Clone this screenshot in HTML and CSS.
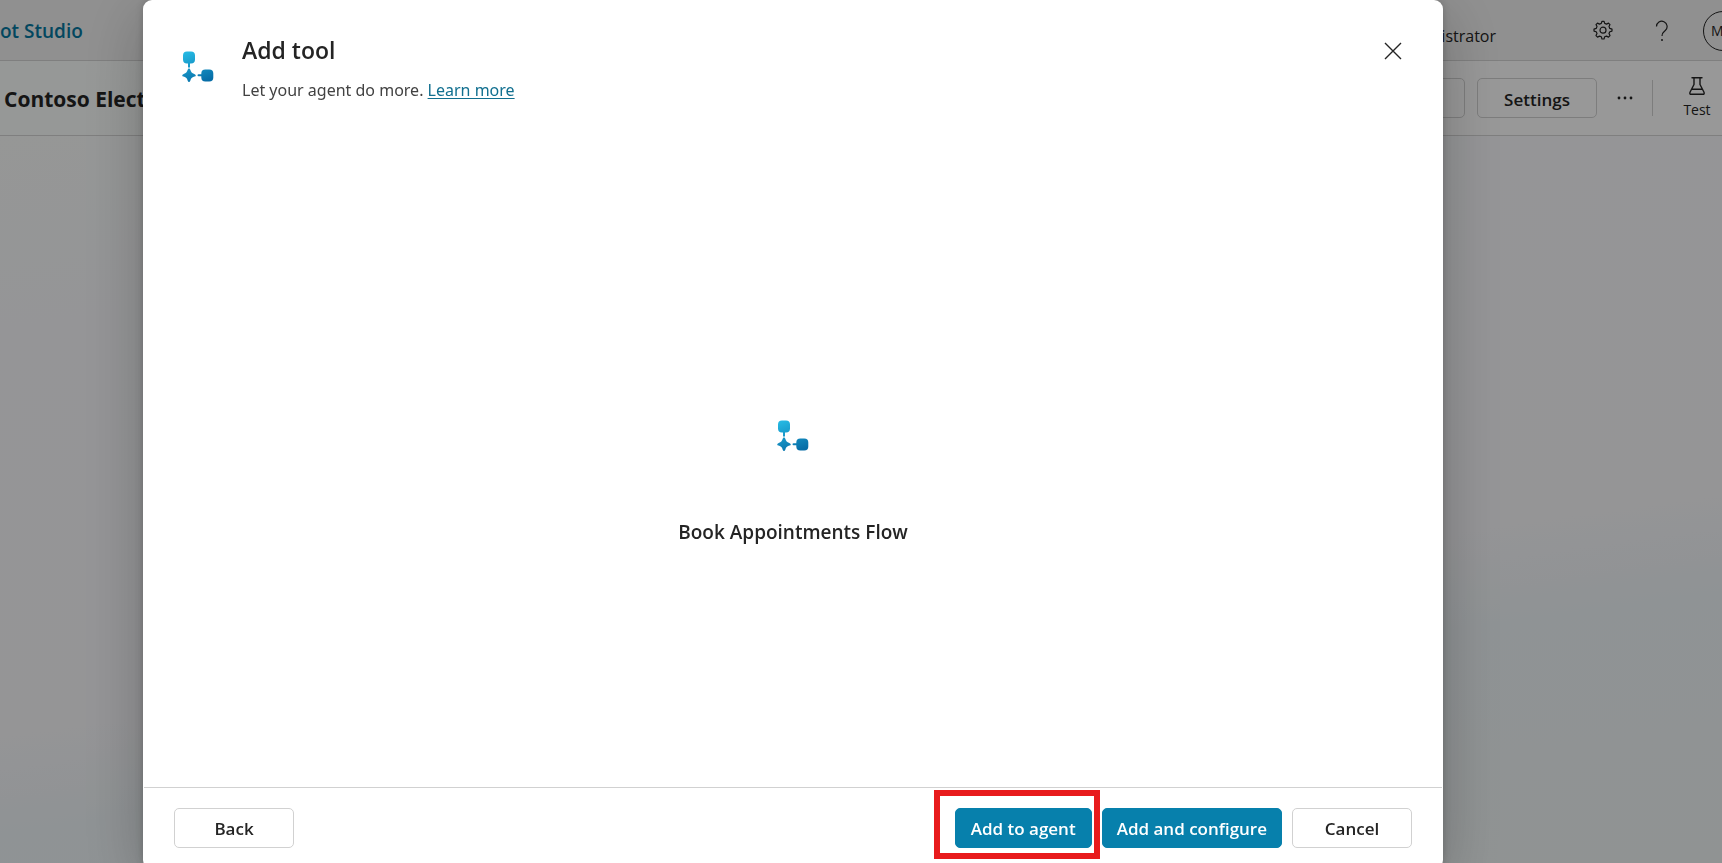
FILE: index.html
```html
<!DOCTYPE html>
<html lang="en">
<head>
<meta charset="utf-8">
<title>Add tool</title>
<link rel="stylesheet" href="styles.css">
</head>
<body>
<svg class="defs" aria-hidden="true">
  <defs>
    <linearGradient id="flow-fill" gradientUnits="userSpaceOnUse" x1="8" y1="0" x2="20" y2="32">
      <stop offset="0" stop-color="#25b8e2"/>
      <stop offset="1" stop-color="#066ca6"/>
    </linearGradient>
    <symbol id="flow" viewBox="0 0 32 32">
      <g fill="url(#flow-fill)">
        <path d="M5 0.500h4q4 0 4 4v4q0 4-4 4H8v4H6v-4H5q-4 0-4-4v-4q0-4 4-4z"/>
        <path d="M7 17.500c.7 0 1 .5 1.300 1.300.8 2.500 1.500 3.200 4 4.200 2 .8 2 2 0 2.600-2.500.9-3.200 1.700-4 4.100-.5 1.700-2.100 1.700-2.600 0-.8-2.400-1.500-3.200-4-4.100-2-.6-2-1.800 0-2.600 2.500-1 3.200-1.700 4-4.200.3-.8.600-1.300 1.300-1.300z"/>
        <path d="M16.500 23.300H19.300V22.500q0-4 4-4h4q4 0 4 4v4q0 4-4 4h-4q-4 0-4-4v-1.200H16.500q-1 0-1-1t1-1z"/>
      </g>
    </symbol>
  </defs>
</svg>

<div class="app">
  <header class="topbar">
    <a class="brand" href="#">ot Studio</a>
    <div class="account">
      <span class="user">Administrator</span>
      <button class="icon-btn gear" aria-label="Settings menu">
        <svg width="22" height="22" viewBox="0 0 22 22" fill="none" stroke="currentColor" stroke-width="1.200" stroke-linejoin="round"><path d="M9.300 3.400 10 1.300h2l.7 2.100 1.800.7 2-1 1.500 1.500-1 2 .8 1.800 2.200.7v2l-2.200.7-.8 1.800 1 2-1.500 1.500-2-1-1.800.7-.7 2.200h-2l-.7-2.200-1.800-.7-2 1L4 15.600l1-2-.8-1.800L2 11.100v-2l2.200-.7L5 6.600l-1-2 1.500-1.500 2 1z"/><circle cx="11" cy="10.200" r="3"/></svg>
      </button>
      <button class="icon-btn help" aria-label="Help">
        <svg width="14" height="22" viewBox="0 0 14 22" fill="none" stroke="currentColor" stroke-width="1.200"><path d="M1.500 6.500a5.300 5.300 0 1 1 8.800 4C8.500 12 7 13 7 16"/><circle cx="7" cy="20" r="1" fill="currentColor" stroke="none"/></svg>
      </button>
      <button class="avatar" aria-label="Account">M</button>
    </div>
  </header>
  <div class="agentbar">
    <h2 class="agent-name">Contoso Electronics</h2>
    <div class="actions">
      <button class="btn">Publish</button>
      <button class="btn">Settings</button>
      <button class="icon-btn more" aria-label="More">
        <svg width="18" height="4" viewBox="0 0 18 4" fill="currentColor"><circle cx="3" cy="2" r="1.400"/><circle cx="9" cy="2" r="1.400"/><circle cx="15" cy="2" r="1.400"/></svg>
      </button>
      <span class="rule"></span>
      <button class="icon-btn test">
        <svg width="18" height="20" viewBox="0 0 18 20" fill="none" stroke="currentColor" stroke-width="1.400" stroke-linejoin="round" stroke-linecap="round"><path d="M4 1.700h10M6 1.700v6.800L2 16.300q-.7 2 1.200 2h11.600q1.900 0 1.200-2L12 8.500V1.700M4 13.200h10"/></svg>
        Test
      </button>
    </div>
  </div>
  <main class="canvas"></main>
</div>

<div class="overlay">
  <section class="dialog" role="dialog" aria-labelledby="title">
    <header class="dialog-head">
      <svg class="flow-icon" aria-hidden="true"><use href="#flow"/></svg>
      <div class="heading">
        <h1 id="title">Add tool</h1>
        <p>Let your agent do more. <a href="#">Learn more</a></p>
      </div>
      <button class="icon-btn close" aria-label="Close">
        <svg width="18" height="18" viewBox="0 0 18 18" stroke="currentColor" stroke-width="1.400"><path d="M1 1l16 16M17 1 1 17"/></svg>
      </button>
    </header>
    <div class="dialog-body">
      <svg class="flow-icon" aria-hidden="true"><use href="#flow"/></svg>
      <h2>Book Appointments Flow</h2>
    </div>
    <footer class="dialog-foot">
      <button class="btn">Back</button>
      <div class="foot-actions">
        <button class="btn primary highlighted">Add to agent</button>
        <button class="btn primary">Add and configure</button>
        <button class="btn">Cancel</button>
      </div>
    </footer>
  </section>
</div>
</body>
</html>
```
FILE: styles.css
```css
* { box-sizing: border-box; }

body {
  margin: 0;
  height: 100vh;
  overflow: hidden;
  font-family: "Open Sans", "Noto Sans", sans-serif;
  font-size: 17px;
  color: #242424;
}

h1, h2, p { margin: 0; }
button { font: inherit; color: inherit; }
svg { display: block; flex: none; }
.defs { position: absolute; width: 0; height: 0; }

.app {
  display: flex;
  flex-direction: column;
  height: 100vh;
}

.topbar {
  display: flex;
  justify-content: space-between;
  align-items: center;
  height: 61px;
  padding-top: 1px;
  background: #f0f0f0;
  border-bottom: 1px solid #d4d4d4;
  overflow: hidden;
}

.brand {
  color: #06779f;
  font-size: 19px;
  font-weight: 600;
  text-decoration: none;
}

.account {
  display: flex;
  align-items: center;
  margin-right: -21px;
}

.user { padding-top: 10px; font-size: 16px; }

.icon-btn {
  display: flex;
  align-items: center;
  justify-content: center;
  padding: 0;
  border: 0;
  background: none;
}

.gear { margin-left: 96px; }
.help { margin: 0 34px 0 41px; }

.avatar {
  width: 40px;
  height: 40px;
  padding: 0 0 0 7px;
  text-align: left;
  border: 1px solid #242424;
  border-radius: 50%;
  background: none;
  font-size: 14px;
}

.agentbar {
  display: flex;
  justify-content: space-between;
  align-items: center;
  height: 75px;
  padding-left: 4px;
  background: linear-gradient(90deg, #fafdfc, #fdfdfd 60%);
  border-bottom: 1px solid #d4d4d4;
}

.agent-name { padding-top: 1px; font-size: 21px; font-weight: 700; }
.actions { display: flex; align-items: center; }
.actions .btn { margin-right: 12px; }

.btn {
  min-width: 120px;
  height: 40px;
  padding: 0 14px;
  border: 1px solid #d1d1d1;
  border-radius: 5px;
  background: #fff;
  font-size: 17px;
  font-weight: 600;
  white-space: nowrap;
}

.actions .btn { padding-top: 2px; background: none; }
.more { width: 32px; height: 40px; }
.rule { width: 1px; height: 36px; margin-left: 11px; background: #d1d1d1; }

.test {
  flex-direction: column;
  gap: 4px;
  width: 44px;
  margin: 0 3px 0 22px;
  font-size: 14px;
  line-height: 20px;
}

.canvas {
  flex: 1;
  background: linear-gradient(172deg, #fafcfb 0%, #f8f9fc 20%, #f8f8fb 62%, #eff5f8 72%, #f1f6f6 100%);
}

.overlay {
  position: fixed;
  inset: 0 0 -6px;
  display: flex;
  padding: 0 279px 0 143px;
  background: rgba(0, 0, 0, 0.4);
}

.dialog {
  flex: 1;
  display: flex;
  flex-direction: column;
  border-radius: 9px;
  background: #fff;
  box-shadow: 0 0 10px rgba(0, 0, 0, 0.2), 0 16px 64px rgba(0, 0, 0, 0.24);
}

.dialog-head {
  display: flex;
  align-items: flex-start;
  padding: 32px 41px 0 39px;
}

.flow-icon { width: 32px; height: 32px; }
.dialog-head .flow-icon { margin-top: 19px; }
.heading { flex: 1; margin-left: 28px; }
.heading h1 { font-size: 23px; font-weight: 600; line-height: 36px; }
.heading p { margin-top: 8px; font-family: "Noto Sans", sans-serif; font-size: 16px; line-height: 28px; color: #424242; }
.heading a { color: #116f8f; text-underline-offset: 2px; text-decoration-thickness: 1px; }
.close { margin-top: 10px; }

.dialog-body {
  flex: 1;
  display: flex;
  flex-direction: column;
  align-items: center;
  justify-content: center;
  gap: 66px;
  padding-top: 74px;
}

.dialog-body h2 { font-size: 19px; font-weight: 600; line-height: 28px; }

.dialog-foot {
  display: flex;
  justify-content: space-between;
  margin: 0 1px;
  padding: 20px 30px 21px;
  border-top: 1px solid #d1d1d1;
}

.foot-actions { display: flex; gap: 10px; }
.primary { position: relative; border-color: #0780ac; background: #0780ac; color: #fff; }
.highlighted { padding: 0 15px; }

/* Callout frame around the recommended action */
.highlighted::after {
  content: "";
  position: absolute;
  inset: -19px -9px -12px -22px;
  border: 6px solid #e81b1d;
}
```
